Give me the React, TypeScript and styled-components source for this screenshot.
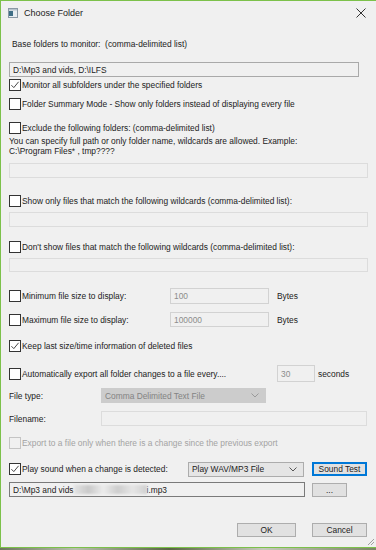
import React from 'react';
import styled, { createGlobalStyle } from 'styled-components';

const Global = createGlobalStyle`
  html, body { margin: 0; padding: 0; background: #5d6b4a; }
  body { font-family: "Liberation Sans", Arial, sans-serif; }
`;

const Screen = styled.div`
  width: 376px;
  height: 550px;
  overflow: hidden;
  display: flex;
  flex-direction: column;
  background: linear-gradient(90deg, #6f7560, #b9bfae 20%, #5a6445 45%, #c6c9bb 70%, #7c8466);
`;

const Window = styled.div`
  position: relative;
  box-sizing: border-box;
  width: 376px;
  height: 548px;
  flex-shrink: 0;
  background: #f0f0f0;
  border-left: 1px solid #7cc14a;
  border-top: 1px solid #7cc14a;
  border-bottom: 1px solid #7cc14a;
  display: flex;
  flex-direction: column;
  font-size: 8.4px;
  color: #222;
`;

const TitleBar = styled.div`
  height: 23px;
  display: flex;
  align-items: center;
  padding: 0 8px 0 7px;
  flex-shrink: 0;
`;

const Title = styled.span`
  margin-left: 6px;
  font-size: 9px;
  color: #222;
`;

const CloseBtn = styled.span`
  margin-left: auto;
  margin-right: 2px;
  display: flex;
`;

const Body = styled.div`
  display: flex;
  flex-direction: column;
  padding: 14px 0 0 8px;
`;

const Row = styled.div<{ $mt: number; $h: number }>`
  display: flex;
  align-items: center;
  margin-top: ${p => p.$mt}px;
  height: ${p => p.$h}px;
  white-space: nowrap;
`;

const Caption = styled.span<{ $w?: number; $pl?: number; $muted?: boolean }>`
  display: inline-block;
  width: ${p => (p.$w ? `${p.$w}px` : 'auto')};
  padding-left: ${p => p.$pl || 0}px;
  color: ${p => (p.$muted ? '#a3a3a3' : '#222')};
  flex-shrink: 0;
`;

const Help = styled.div`
  margin-top: 3px;
  line-height: 9.5px;
`;

const Field = styled.div<{ $w: number; $h: number; $tone: 'normal' | 'dark' | 'disabled' | 'faint'; $mt?: number }>`
  box-sizing: border-box;
  width: ${p => p.$w}px;
  height: ${p => p.$h}px;
  margin-top: ${p => p.$mt || 0}px;
  flex-shrink: 0;
  display: flex;
  align-items: center;
  padding-left: 3px;
  background: #f0f0f0;
  border: 1px solid
    ${p =>
      p.$tone === 'dark' ? '#7a7a7a' : p.$tone === 'normal' ? '#a9a9a9' : p.$tone === 'disabled' ? '#d2d2d2' : '#dcdcdc'};
  color: ${p => (p.$tone === 'disabled' ? '#8c8c8c' : '#222')};
  white-space: nowrap;
  overflow: hidden;
`;

const Blur = styled.span`
  display: inline-block;
  width: 73px;
  height: 9px;
  background: linear-gradient(90deg, #e4e4e4, #c9c9c9 20%, #ececec 40%, #cdcdcd 60%, #e6e6e6 80%, #d0d0d0);
  filter: blur(1.2px);
`;

const Combo = styled.div<{ $w: number; $disabled?: boolean }>`
  box-sizing: border-box;
  width: ${p => p.$w}px;
  height: 15px;
  flex-shrink: 0;
  display: flex;
  align-items: center;
  padding: 0 6px 0 3px;
  background: ${p => (p.$disabled ? '#cccccc' : '#e5e5e5')};
  border: 1px solid ${p => (p.$disabled ? '#cccccc' : '#acacac')};
  color: ${p => (p.$disabled ? '#838383' : '#222')};
  svg { margin-left: auto; }
`;

const Button = styled.div<{ $w: number; $ml: number; $focus?: boolean }>`
  box-sizing: border-box;
  width: ${p => p.$w}px;
  height: 14px;
  margin-left: ${p => p.$ml}px;
  flex-shrink: 0;
  display: flex;
  align-items: center;
  justify-content: center;
  background: #e1e1e1;
  border: 1px solid ${p => (p.$focus ? '#0078d7' : '#adadad')};
  box-shadow: ${p => (p.$focus ? 'inset 0 0 0 1px #0078d7' : 'none')};
  color: #222;
`;

const BoxMark = styled.span<{ $disabled?: boolean }>`
  box-sizing: border-box;
  width: 12px;
  height: 12px;
  margin-right: 1px;
  flex-shrink: 0;
  border: 1px solid ${p => (p.$disabled ? '#c4c4c4' : '#333')};
  background: ${p => (p.$disabled ? '#f0f0f0' : '#fff')};
  display: flex;
  align-items: center;
  justify-content: center;
`;

const Grip = styled.svg`
  position: absolute;
  right: 1px;
  bottom: 1px;
`;

const Check = ({ on, disabled }: { on?: boolean; disabled?: boolean }) => (
  <BoxMark $disabled={disabled}>
    {on && (
      <svg width="10" height="10" viewBox="0 0 10 10">
        <path d="M1.4 5.2 L3.8 7.6 L8.6 1.8" fill="none" stroke="#333" strokeWidth="0.9" />
      </svg>
    )}
  </BoxMark>
);

const Chevron = ({ color }: { color: string }) => (
  <svg width="8" height="5" viewBox="0 0 8 5">
    <path d="M0.5 0.5 L4 4 L7.5 0.5" fill="none" stroke={color} strokeWidth="1" />
  </svg>
);

const App = () => {
  return (
    <Screen>
      <Global />
      <Window>
        <TitleBar>
          <svg width="10" height="10" viewBox="0 0 10 10">
            <rect x="0.5" y="0.5" width="9" height="9" fill="#e8eef2" stroke="#8a98a4" />
            <rect x="1" y="3" width="4" height="5" fill="#3f6e86" />
            <rect x="1" y="1" width="8" height="1.5" fill="#b7c3cc" />
          </svg>
          <Title>Choose Folder</Title>
          <CloseBtn>
            <svg width="10" height="10" viewBox="0 0 10 10">
              <path d="M0.5 0.5 L9.5 9.5 M9.5 0.5 L0.5 9.5" stroke="#333" strokeWidth="1" />
            </svg>
          </CloseBtn>
        </TitleBar>
        <Body>
          <Row $mt={0} $h={12}>
            <Caption $pl={3}>Base folders to monitor:&nbsp; (comma-delimited list)</Caption>
          </Row>
          <Field $w={350} $h={15} $tone="normal" $mt={12}>D:\Mp3 and vids, D:\ILFS</Field>
          <Row $mt={1} $h={13}>
            <Check on />
            <Caption>Monitor all subfolders under the specified folders</Caption>
          </Row>
          <Row $mt={6} $h={13}>
            <Check />
            <Caption>Folder Summary Mode - Show only folders instead of displaying every file</Caption>
          </Row>
          <Row $mt={11} $h={13}>
            <Check />
            <Caption>Exclude the following folders: (comma-delimited list)</Caption>
          </Row>
          <Help>
            You can specify full path or only folder name, wildcards are allowed. Example:
            <br />
            C:\Program Files* , tmp????
          </Help>
          <Field $w={359} $h={15} $tone="faint" $mt={7} />
          <Row $mt={16} $h={13}>
            <Check />
            <Caption>Show only files that match the following wildcards (comma-delimited list):</Caption>
          </Row>
          <Field $w={359} $h={15} $tone="faint" $mt={5} />
          <Row $mt={13} $h={13}>
            <Check />
            <Caption>Don't show files that match the following wildcards (comma-delimited list):</Caption>
          </Row>
          <Field $w={359} $h={14} $tone="faint" $mt={5} />
          <Row $mt={16} $h={16}>
            <Check />
            <Caption $w={148}>Minimum file size to display:</Caption>
            <Field $w={99} $h={16} $tone="disabled">100</Field>
            <Caption $pl={8}>Bytes</Caption>
          </Row>
          <Row $mt={8} $h={15}>
            <Check />
            <Caption $w={148}>Maximum file size to display:</Caption>
            <Field $w={99} $h={15} $tone="disabled">100000</Field>
            <Caption $pl={8}>Bytes</Caption>
          </Row>
          <Row $mt={12} $h={13}>
            <Check on />
            <Caption>Keep last size/time information of deleted files</Caption>
          </Row>
          <Row $mt={13} $h={17}>
            <Check />
            <Caption $w={255}>Automatically export all folder changes to a file every....</Caption>
            <Field $w={38} $h={17} $tone="disabled">30</Field>
            <Caption $pl={3}>seconds</Caption>
          </Row>
          <Row $mt={6} $h={15}>
            <Caption $w={92}>File type:</Caption>
            <Combo $w={165} $disabled>
              Comma Delimited Text File
              <Chevron color="#9a9a9a" />
            </Combo>
          </Row>
          <Row $mt={8} $h={15}>
            <Caption $w={92}>Filename:</Caption>
            <Field $w={266} $h={15} $tone="faint" />
          </Row>
          <Row $mt={10} $h={13}>
            <Check disabled />
            <Caption $muted>Export to a file only when there is a change since the previous export</Caption>
          </Row>
          <Row $mt={13} $h={14}>
            <Check on />
            <Caption $w={166}>Play sound when a change is detected:</Caption>
            <Combo $w={116}>
              Play WAV/MP3 File
              <Chevron color="#555" />
            </Combo>
            <Button $w={55} $ml={8} $focus>Sound Test</Button>
          </Row>
          <Row $mt={6} $h={15}>
            <Field $w={296} $h={15} $tone="dark">
              D:\Mp3 and vids<Blur />i.mp3
            </Field>
            <Button $w={35} $ml={7}>...</Button>
          </Row>
          <Row $mt={26} $h={14}>
            <Button $w={59} $ml={228}>OK</Button>
            <Button $w={55} $ml={16}>Cancel</Button>
          </Row>
        </Body>
        <Grip width="9" height="9" viewBox="0 0 9 9">
          <path d="M8 2 L2 8 M8 5 L5 8" stroke="#a0a0a0" strokeWidth="1" />
        </Grip>
      </Window>
    </Screen>
  );
};

export default App;
